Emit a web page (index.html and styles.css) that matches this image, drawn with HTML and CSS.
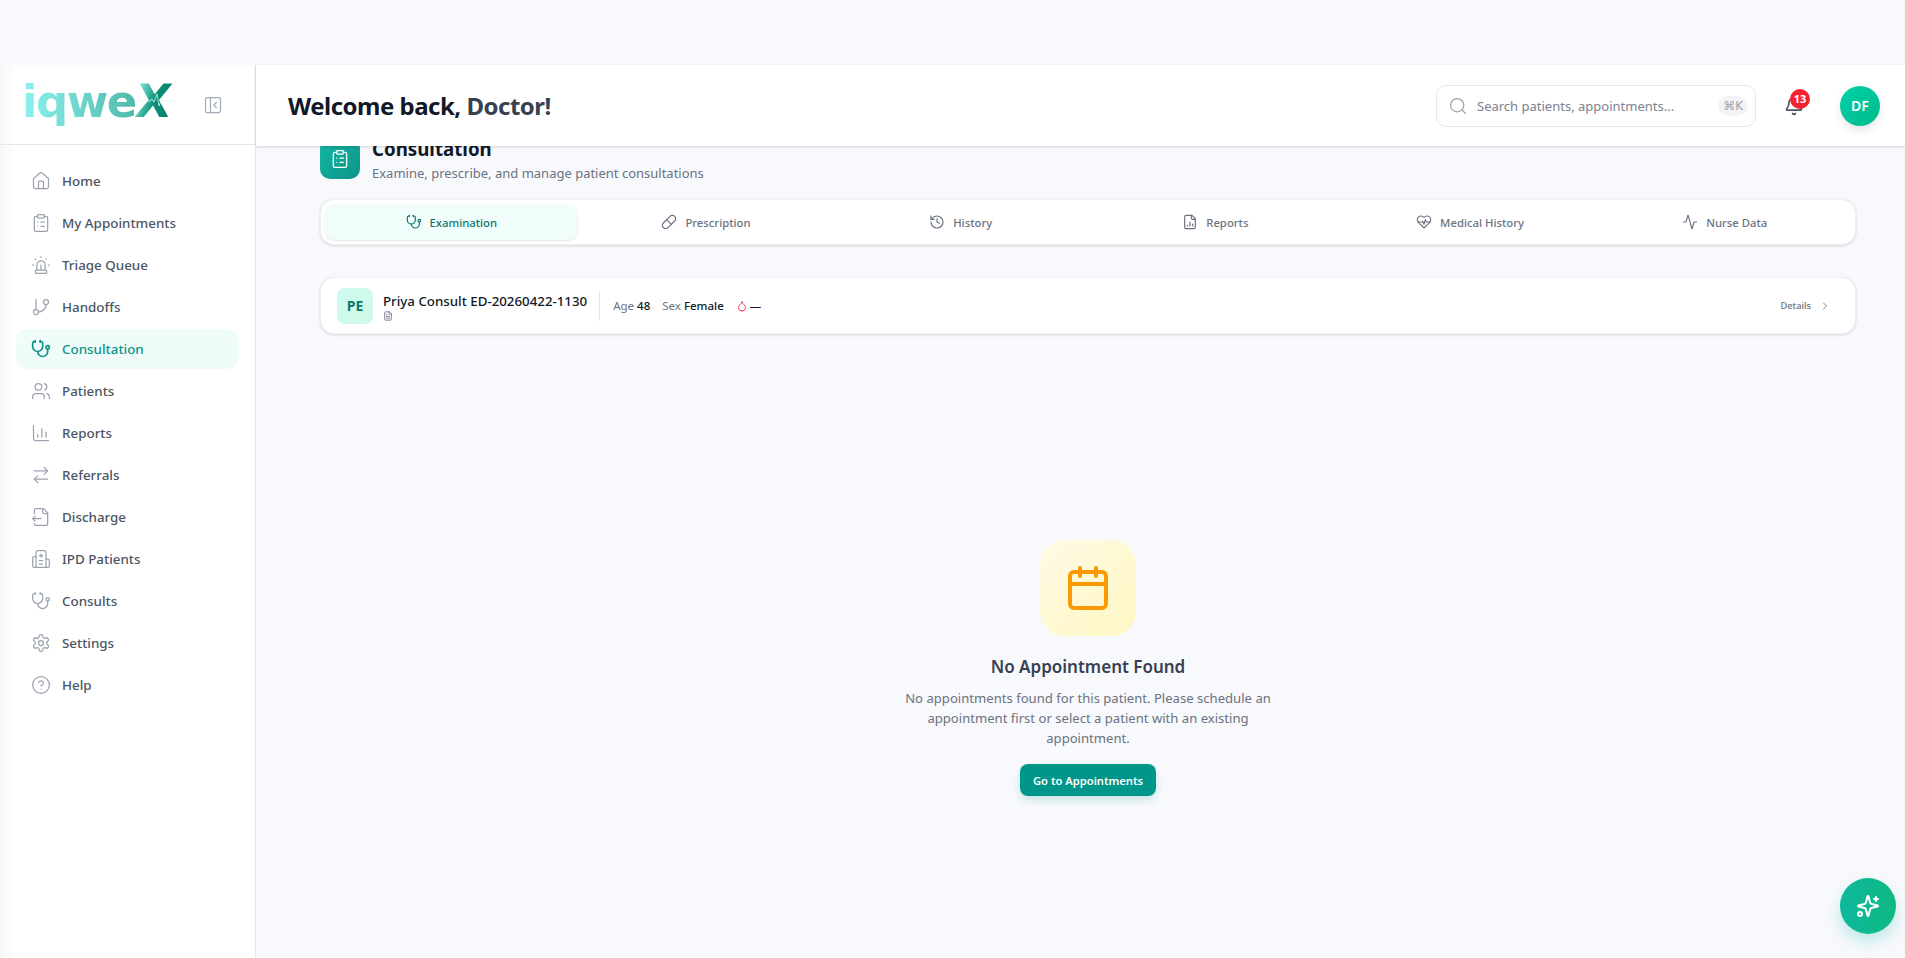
FILE: index.html
```html
<!DOCTYPE html>
<html lang="en">
<head>
  <meta charset="UTF-8" />
  <meta name="viewport" content="width=device-width, initial-scale=1.0" />
  <title>iqweX - Consultation</title>
  <link rel="stylesheet" href="styles.css">
</head>
<body>
  <svg class="sprite" xmlns="http://www.w3.org/2000/svg">
    <symbol id="i-home" viewBox="0 0 24 24"><path d="M15 21v-8a1 1 0 0 0-1-1h-4a1 1 0 0 0-1 1v8"/><path d="M3 10a2 2 0 0 1 .709-1.528l7-5.999a2 2 0 0 1 2.582 0l7 5.999A2 2 0 0 1 21 10v9a2 2 0 0 1-2 2H5a2 2 0 0 1-2-2z"/></symbol>
    <symbol id="i-clipboard" viewBox="0 0 24 24"><rect x="8" y="2" width="8" height="4" rx="1"/><path d="M16 4h2a2 2 0 0 1 2 2v14a2 2 0 0 1-2 2H6a2 2 0 0 1-2-2V6a2 2 0 0 1 2-2h2"/><path d="M12 11h4"/><path d="M12 16h4"/><path d="M8 11h.01"/><path d="M8 16h.01"/></symbol>
    <symbol id="i-siren" viewBox="0 0 24 24"><path d="M7 18v-6a5 5 0 1 1 10 0v6"/><path d="M5 21a1 1 0 0 0 1 1h12a1 1 0 0 0 1-1v-1a2 2 0 0 0-2-2H7a2 2 0 0 0-2 2z"/><path d="M21 12h1"/><path d="M18.5 4.5 18 5"/><path d="M2 12h1"/><path d="M12 2v1"/><path d="m4.929 4.929.707.707"/><path d="M12 12v6"/></symbol>
    <symbol id="i-branch" viewBox="0 0 24 24"><path d="M6 3v12"/><circle cx="18" cy="6" r="3"/><circle cx="6" cy="18" r="3"/><path d="M18 9a9 9 0 0 1-9 9"/></symbol>
    <symbol id="i-stethoscope" viewBox="0 0 24 24"><path d="M11 2v2"/><path d="M5 2v2"/><path d="M5 3H4a2 2 0 0 0-2 2v4a6 6 0 0 0 12 0V5a2 2 0 0 0-2-2h-1"/><path d="M8 15a6 6 0 0 0 12 0v-3"/><circle cx="20" cy="10" r="2"/></symbol>
    <symbol id="i-users" viewBox="0 0 24 24"><path d="M16 21v-2a4 4 0 0 0-4-4H6a4 4 0 0 0-4 4v2"/><circle cx="9" cy="7" r="4"/><path d="M22 21v-2a4 4 0 0 0-3-3.87"/><path d="M16 3.13a4 4 0 0 1 0 7.75"/></symbol>
    <symbol id="i-chart" viewBox="0 0 24 24"><path d="M3 3v16a2 2 0 0 0 2 2h16"/><path d="M18 17v-6"/><path d="M13 17V7"/><path d="M8 17v-3"/></symbol>
    <symbol id="i-arrows" viewBox="0 0 24 24"><path d="m16 3 4 4-4 4"/><path d="M20 7H4"/><path d="m8 21-4-4 4-4"/><path d="M4 17h16"/></symbol>
    <symbol id="i-file-out" viewBox="0 0 24 24"><path d="M4 8V4a2 2 0 0 1 2-2h9l5 5v13a2 2 0 0 1-2 2H6a2 2 0 0 1-2-2"/><path d="M14 2v4a2 2 0 0 0 2 2h4"/><path d="M12 14H2"/><path d="m5 11-3 3 3 3"/></symbol>
    <symbol id="i-hospital" viewBox="0 0 24 24"><path d="M12 6v4"/><path d="M14 14h-4"/><path d="M14 18h-4"/><path d="M14 8h-4"/><path d="M18 12h2a2 2 0 0 1 2 2v6a2 2 0 0 1-2 2H4a2 2 0 0 1-2-2v-9a2 2 0 0 1 2-2h2"/><path d="M18 22V4a2 2 0 0 0-2-2H8a2 2 0 0 0-2 2v18"/></symbol>
    <symbol id="i-gear" viewBox="0 0 24 24"><path d="M12.22 2h-.44a2 2 0 0 0-2 2v.18a2 2 0 0 1-1 1.73l-.43.25a2 2 0 0 1-2 0l-.15-.08a2 2 0 0 0-2.73.73l-.22.38a2 2 0 0 0 .73 2.73l.15.1a2 2 0 0 1 1 1.72v.51a2 2 0 0 1-1 1.74l-.15.09a2 2 0 0 0-.73 2.73l.22.38a2 2 0 0 0 2.73.73l.15-.08a2 2 0 0 1 2 0l.43.25a2 2 0 0 1 1 1.73V20a2 2 0 0 0 2 2h.44a2 2 0 0 0 2-2v-.18a2 2 0 0 1 1-1.73l.43-.25a2 2 0 0 1 2 0l.15.08a2 2 0 0 0 2.73-.73l.22-.39a2 2 0 0 0-.73-2.73l-.15-.08a2 2 0 0 1-1-1.74v-.5a2 2 0 0 1 1-1.74l.15-.09a2 2 0 0 0 .73-2.73l-.22-.38a2 2 0 0 0-2.73-.73l-.15.08a2 2 0 0 1-2 0l-.43-.25a2 2 0 0 1-1-1.73V4a2 2 0 0 0-2-2z"/><circle cx="12" cy="12" r="3"/></symbol>
    <symbol id="i-help" viewBox="0 0 24 24"><circle cx="12" cy="12" r="10"/><path d="M9.09 9a3 3 0 0 1 5.83 1c0 2-3 3-3 3"/><path d="M12 17h.01"/></symbol>
    <symbol id="i-panel" viewBox="0 0 24 24"><rect x="3" y="3" width="18" height="18" rx="2"/><path d="M9 3v18"/><path d="m16 15-3-3 3-3"/></symbol>
    <symbol id="i-search" viewBox="0 0 24 24"><circle cx="11" cy="11" r="8"/><path d="m21 21-4.3-4.3"/></symbol>
    <symbol id="i-bell" viewBox="0 0 24 24"><path d="M10.268 21a2 2 0 0 0 3.464 0"/><path d="M3.262 15.326A1 1 0 0 0 4 17h16a1 1 0 0 0 .74-1.673C19.41 13.956 18 12.499 18 8A6 6 0 0 0 6 8c0 4.499-1.411 5.956-2.738 7.326"/></symbol>
    <symbol id="i-pill" viewBox="0 0 24 24"><path d="m10.5 20.5 10-10a4.95 4.95 0 1 0-7-7l-10 10a4.95 4.95 0 1 0 7 7Z"/><path d="m8.5 8.5 7 7"/></symbol>
    <symbol id="i-history" viewBox="0 0 24 24"><path d="M3 12a9 9 0 1 0 9-9 9.75 9.75 0 0 0-6.74 2.74L3 8"/><path d="M3 3v5h5"/><path d="M12 7v5l4 2"/></symbol>
    <symbol id="i-file-chart" viewBox="0 0 24 24"><path d="M15 2H6a2 2 0 0 0-2 2v16a2 2 0 0 0 2 2h12a2 2 0 0 0 2-2V7Z"/><path d="M14 2v4a2 2 0 0 0 2 2h4"/><path d="M8 18v-1"/><path d="M12 18v-6"/><path d="M16 18v-3"/></symbol>
    <symbol id="i-heart" viewBox="0 0 24 24"><path d="M19 14c1.49-1.46 3-3.21 3-5.5A5.5 5.5 0 0 0 16.5 3c-1.76 0-3 .5-4.5 2-1.5-1.5-2.74-2-4.5-2A5.5 5.5 0 0 0 2 8.5c0 2.3 1.5 4.05 3 5.5l7 7Z"/><path d="M3.22 12H9.5l.5-1 2 4.5 2-7 1.5 3.5h5.27"/></symbol>
    <symbol id="i-activity" viewBox="0 0 24 24"><path d="M22 12h-2.48a2 2 0 0 0-1.93 1.46l-2.35 8.36a.25.25 0 0 1-.48 0L9.24 2.18a.25.25 0 0 0-.48 0l-2.35 8.36A2 2 0 0 1 4.49 12H2"/></symbol>
    <symbol id="i-drop" viewBox="0 0 24 24"><path d="M12 22a7 7 0 0 0 7-7c0-2-1-3.9-3-5.5s-3.5-4-4-6.5c-.5 2.5-2 4.9-4 6.5C6 11.1 5 13 5 15a7 7 0 0 0 7 7z"/></symbol>
    <symbol id="i-file" viewBox="0 0 24 24"><path d="M15 2H6a2 2 0 0 0-2 2v16a2 2 0 0 0 2 2h12a2 2 0 0 0 2-2V7Z"/><path d="M14 2v4a2 2 0 0 0 2 2h4"/><path d="M10 9H8"/><path d="M16 13H8"/><path d="M16 17H8"/></symbol>
    <symbol id="i-chevron" viewBox="0 0 24 24"><path d="m9 18 6-6-6-6"/></symbol>
    <symbol id="i-calendar" viewBox="0 0 24 24"><path d="M8 2v4"/><path d="M16 2v4"/><rect x="3" y="4" width="18" height="18" rx="2"/><path d="M3 10h18"/></symbol>
    <symbol id="i-sparkles" viewBox="0 0 24 24"><path d="M9.937 15.5A2 2 0 0 0 8.5 14.063l-6.135-1.582a.5.5 0 0 1 0-.962L8.5 9.936A2 2 0 0 0 9.937 8.5l1.582-6.135a.5.5 0 0 1 .963 0L14.063 8.5A2 2 0 0 0 15.5 9.937l6.135 1.581a.5.5 0 0 1 0 .964L15.5 14.063a2 2 0 0 0-1.437 1.437l-1.582 6.135a.5.5 0 0 1-.963 0z"/><path d="M20 3v4"/><path d="M22 5h-4"/><circle cx="4" cy="20" r="2"/></symbol>
  </svg>

  <div class="app">
    <aside class="sidebar">
      <div class="brand">
        <div class="logo">
          <span class="logo-text">iqwe</span><span class="logo-x">X</span>
          <svg class="logo-pulse" viewBox="0 0 40 14"><path d="M0 8h14l2-2 2 3 3-8 2 12 2-5h15"/></svg>
        </div>
        <button class="collapse"><svg class="icon"><use href="#i-panel"/></svg></button>
      </div>
      <nav class="nav">
        <a class="nav-item"><svg class="icon"><use href="#i-home"/></svg>Home</a>
        <a class="nav-item"><svg class="icon"><use href="#i-clipboard"/></svg>My Appointments</a>
        <a class="nav-item"><svg class="icon"><use href="#i-siren"/></svg>Triage Queue</a>
        <a class="nav-item"><svg class="icon"><use href="#i-branch"/></svg>Handoffs</a>
        <a class="nav-item active"><svg class="icon"><use href="#i-stethoscope"/></svg>Consultation</a>
        <a class="nav-item"><svg class="icon"><use href="#i-users"/></svg>Patients</a>
        <a class="nav-item"><svg class="icon"><use href="#i-chart"/></svg>Reports</a>
        <a class="nav-item"><svg class="icon"><use href="#i-arrows"/></svg>Referrals</a>
        <a class="nav-item"><svg class="icon"><use href="#i-file-out"/></svg>Discharge</a>
        <a class="nav-item"><svg class="icon"><use href="#i-hospital"/></svg>IPD Patients</a>
        <a class="nav-item"><svg class="icon"><use href="#i-stethoscope"/></svg>Consults</a>
        <a class="nav-item"><svg class="icon"><use href="#i-gear"/></svg>Settings</a>
        <a class="nav-item"><svg class="icon"><use href="#i-help"/></svg>Help</a>
      </nav>
    </aside>

    <div class="main">
      <header class="topbar">
        <h1 class="welcome">Welcome back, <span>Doctor!</span></h1>
        <div class="topbar-right">
          <div class="search">
            <svg class="icon"><use href="#i-search"/></svg>
            <span class="search-text">Search patients, appointments...</span>
            <kbd class="kbd">⌘K</kbd>
          </div>
          <div class="bell">
            <svg class="icon"><use href="#i-bell"/></svg>
            <span class="badge">13</span>
          </div>
          <div class="avatar">DF</div>
        </div>
      </header>

      <main class="content">
        <div class="page-head">
          <div class="page-icon"><svg class="icon"><use href="#i-clipboard"/></svg></div>
          <div>
            <h2 class="page-title">Consultation</h2>
            <p class="page-sub">Examine, prescribe, and manage patient consultations</p>
          </div>
        </div>

        <div class="tabs">
          <a class="tab active"><svg class="icon"><use href="#i-stethoscope"/></svg>Examination</a>
          <a class="tab"><svg class="icon"><use href="#i-pill"/></svg>Prescription</a>
          <a class="tab"><svg class="icon"><use href="#i-history"/></svg>History</a>
          <a class="tab"><svg class="icon"><use href="#i-file-chart"/></svg>Reports</a>
          <a class="tab"><svg class="icon"><use href="#i-heart"/></svg>Medical History</a>
          <a class="tab"><svg class="icon"><use href="#i-activity"/></svg>Nurse Data</a>
        </div>

        <div class="patient">
          <div class="patient-avatar">PE</div>
          <div class="patient-name">
            <div>Priya Consult ED-20260422-1130</div>
            <svg class="icon"><use href="#i-file"/></svg>
          </div>
          <div class="patient-meta">
            <span>Age <b>48</b></span>
            <span>Sex <b>Female</b></span>
            <span class="blood"><svg class="icon"><use href="#i-drop"/></svg><b>—</b></span>
          </div>
          <a class="details">Details<svg class="icon"><use href="#i-chevron"/></svg></a>
        </div>

        <div class="empty">
          <div class="empty-icon"><svg class="icon"><use href="#i-calendar"/></svg></div>
          <h3 class="empty-title">No Appointment Found</h3>
          <p class="empty-text">No appointments found for this patient. Please schedule an appointment first or select a patient with an existing appointment.</p>
          <button class="empty-btn">Go to Appointments</button>
        </div>
      </main>
    </div>
  </div>

  <button class="fab"><svg class="icon"><use href="#i-sparkles"/></svg></button>
</body>
</html>
```

FILE: styles.css
```css
* {
  box-sizing: border-box;
}
html, body {
  height: 100%;
}
body {
  margin: 0;
  padding-top: 65px;
  overflow: hidden;
  font-family: "Noto Sans", "Open Sans", sans-serif;
  background: #f8f9fd;
  color: #111827;
}
h1, h2, h3, p {
  margin: 0;
}
button {
  font-family: inherit;
  border: 0;
  cursor: pointer;
}
.sprite {
  display: none;
}
.icon {
  width: 20px;
  height: 20px;
  flex: none;
  fill: none;
  stroke: currentColor;
  stroke-width: 1.5;
  stroke-linecap: round;
  stroke-linejoin: round;
}
.app {
  display: flex;
  height: 100%;
}

/* sidebar */
.sidebar {
  width: 256px;
  flex: none;
  background: linear-gradient(90deg, #f6f6f7, #fff 15px);
  border-right: 1px solid #e5e7eb;
}
.brand {
  height: 80px;
  display: flex;
  align-items: center;
  justify-content: space-between;
  padding: 0 32px 0 22px;
  border-bottom: 1px solid #e5e7eb;
}
.logo {
  position: relative;
  display: flex;
  align-items: baseline;
  width: 150px;
  height: 48px;
  line-height: 48px;
  font-family: "DejaVu Sans", sans-serif;
  font-weight: 700;
  font-size: 45px;
  letter-spacing: -1.5px;
  transform: translateY(-4px);
}
.logo-text {
  background: linear-gradient(90deg, #8cf3f0, #4fb9a9);
  -webkit-background-clip: text;
  background-clip: text;
  color: transparent;
}
.logo-x {
  font-size: 46px;
  transform: skewX(-8deg);
  background: linear-gradient(100deg, #7fe6d8 5%, #0b8f78 55%, #07806a);
  -webkit-background-clip: text;
  background-clip: text;
  color: transparent;
}
.logo-pulse {
  position: absolute;
  right: -4px;
  top: 16px;
  width: 40px;
  height: 14px;
  fill: none;
  stroke: #d6f5ee;
  stroke-width: 0.8;
}
.collapse {
  display: flex;
  padding: 0;
  background: none;
  color: #a3abba;
}
.nav {
  display: flex;
  flex-direction: column;
  gap: 2px;
  padding: 16px;
}
.nav-item {
  display: flex;
  align-items: center;
  gap: 11px;
  height: 40px;
  padding: 0 15px;
  border-radius: 12px;
  font-size: 13.4px;
  font-weight: 500;
  color: #4b5563;
}
.nav-item .icon {
  color: #9ca3af;
}
.nav-item.active {
  background: #effcf9;
  color: #0d9488;
}
.nav-item.active .icon {
  color: #0d9488;
  stroke-width: 2;
}

/* top bar */
.main {
  flex: 1;
  min-width: 0;
  display: flex;
  flex-direction: column;
}
.topbar {
  position: relative;
  z-index: 2;
  height: 81px;
  flex: none;
  display: flex;
  align-items: center;
  justify-content: space-between;
  padding: 0 25px 0 32px;
  background: #fff;
  box-shadow: 0 1px 3px rgba(0, 0, 0, 0.16);
}
.welcome {
  font-size: 24px;
  font-weight: 700;
  letter-spacing: -0.5px;
}
.welcome span {
  color: #374151;
}
.topbar-right {
  display: flex;
  align-items: center;
}
.search {
  width: 320px;
  height: 42px;
  display: flex;
  align-items: center;
  gap: 9px;
  padding: 0 7px 0 11px;
  border: 1px solid #e5e7eb;
  border-radius: 10px;
  color: #9ca3af;
}
.search-text {
  flex: 1;
  font-size: 13px;
  color: #7b8290;
}
.kbd {
  height: 20px;
  padding: 0 5px;
  border-radius: 10px;
  background: #f3f4f6;
  font-family: "DejaVu Sans", sans-serif;
  font-size: 12px;
  line-height: 20px;
  color: #9ca3af;
}
.bell {
  position: relative;
  display: flex;
  margin: 0 36px 0 28px;
  color: #4b5563;
}
.bell .icon {
  stroke-width: 2;
}
.badge {
  position: absolute;
  left: 6px;
  top: -7px;
  width: 20px;
  height: 20px;
  border-radius: 50%;
  background: #f5222d;
  color: #fff;
  font-size: 11px;
  font-weight: 700;
  line-height: 20px;
  text-align: center;
}
.avatar {
  width: 40px;
  height: 40px;
  border-radius: 50%;
  background: linear-gradient(135deg, #00d2a8, #00b98a);
  box-shadow: 0 4px 8px rgba(0, 0, 0, 0.1);
  color: #fff;
  font-size: 14px;
  font-weight: 600;
  line-height: 40px;
  text-align: center;
}

/* content */
.content {
  flex: 1;
  overflow: hidden;
  padding: 0 49px 0 64px;
}
.page-head {
  display: flex;
  align-items: center;
  gap: 12px;
  margin-top: -11px;
}
.page-icon {
  width: 40px;
  height: 40px;
  display: flex;
  align-items: center;
  justify-content: center;
  border-radius: 10px;
  background: linear-gradient(135deg, #14b8a6, #0d9488);
  color: #fff;
}
.page-title {
  font-size: 18.7px;
  font-weight: 700;
  line-height: 28px;
}
.page-sub {
  font-size: 13px;
  line-height: 20px;
  color: #6b7280;
}
.tabs {
  display: grid;
  grid-template-columns: repeat(6, 1fr);
  gap: 2px;
  height: 46px;
  margin-top: 16px;
  padding: 4px;
  background: #fff;
  border: 1px solid #eef0f3;
  border-radius: 14px;
  box-shadow: 0 1px 3px rgba(0, 0, 0, 0.14);
}
.tab {
  display: flex;
  align-items: center;
  justify-content: center;
  gap: 8px;
  border-radius: 10px;
  font-size: 11.3px;
  font-weight: 500;
  color: #6b7280;
}
.tab .icon {
  width: 16px;
  height: 16px;
  stroke-width: 1.75;
}
.tab.active {
  background: #f0fdfa;
  color: #0f766e;
  box-shadow: 0 1px 2px rgba(0, 0, 0, 0.1);
}
.patient {
  height: 57px;
  display: flex;
  align-items: center;
  margin-top: 32px;
  padding: 0 16px;
  background: #fff;
  border: 1px solid #eef0f3;
  border-radius: 14px;
  box-shadow: 0 1px 3px rgba(0, 0, 0, 0.14);
}
.patient-avatar {
  width: 36px;
  height: 36px;
  border-radius: 8px;
  background: linear-gradient(135deg, #ccfbf1, #d1fae5);
  color: #0f766e;
  font-size: 14px;
  font-weight: 700;
  line-height: 36px;
  text-align: center;
}
.patient-name {
  margin-left: 10px;
  padding: 1px 12px 0 0;
  font-size: 13.3px;
  font-weight: 500;
  line-height: 19px;
  border-right: 1px solid #e5e7eb;
}
.patient-name .icon {
  display: block;
  width: 10px;
  height: 10px;
  stroke-width: 2;
  color: #6b7280;
}
.patient-meta {
  display: flex;
  align-items: center;
  gap: 12px;
  margin-left: 13px;
  font-size: 11.5px;
  color: #6b7280;
}
.patient-meta b {
  font-weight: 500;
  color: #111827;
}
.blood {
  display: flex;
  align-items: center;
  gap: 2px;
}
.blood .icon {
  width: 12px;
  height: 12px;
  stroke-width: 2;
  color: #f43f5e;
}
.details {
  display: flex;
  align-items: center;
  gap: 8px;
  margin-left: auto;
  margin-right: 8px;
  font-size: 9.3px;
  font-weight: 500;
  color: #6b7280;
}
.details .icon {
  width: 12px;
  height: 12px;
  color: #4b5563;
}

/* empty state */
.empty {
  display: flex;
  flex-direction: column;
  align-items: center;
  padding-top: 206px;
}
.empty-icon {
  width: 96px;
  height: 96px;
  display: flex;
  align-items: center;
  justify-content: center;
  border-radius: 24px;
  background: linear-gradient(135deg, #fffbe5, #fef6c3);
  color: #fb9a05;
}
.empty-icon .icon {
  width: 48px;
  height: 48px;
  stroke-width: 2;
}
.empty-title {
  margin-top: 17px;
  font-size: 17px;
  font-weight: 600;
  line-height: 28px;
  color: #374151;
}
.empty-text {
  max-width: 384px;
  margin-top: 7px;
  font-size: 13.1px;
  line-height: 20px;
  text-align: center;
  color: #6b7280;
}
.empty-btn {
  height: 32px;
  margin-top: 16px;
  padding: 0 13px;
  border-radius: 8px;
  background: #00968a;
  box-shadow: 0 4px 8px rgba(13, 148, 136, 0.2);
  color: #fff;
  font-size: 11.2px;
  font-weight: 600;
}

/* floating button */
.fab {
  position: fixed;
  right: 9px;
  bottom: 24px;
  width: 56px;
  height: 56px;
  display: flex;
  align-items: center;
  justify-content: center;
  border-radius: 50%;
  background: linear-gradient(90deg, #0db89e, #10b981);
  box-shadow: 0 8px 16px rgba(20, 184, 166, 0.25);
  color: #fff;
}
.fab .icon {
  width: 24px;
  height: 24px;
  stroke-width: 2;
}
```
